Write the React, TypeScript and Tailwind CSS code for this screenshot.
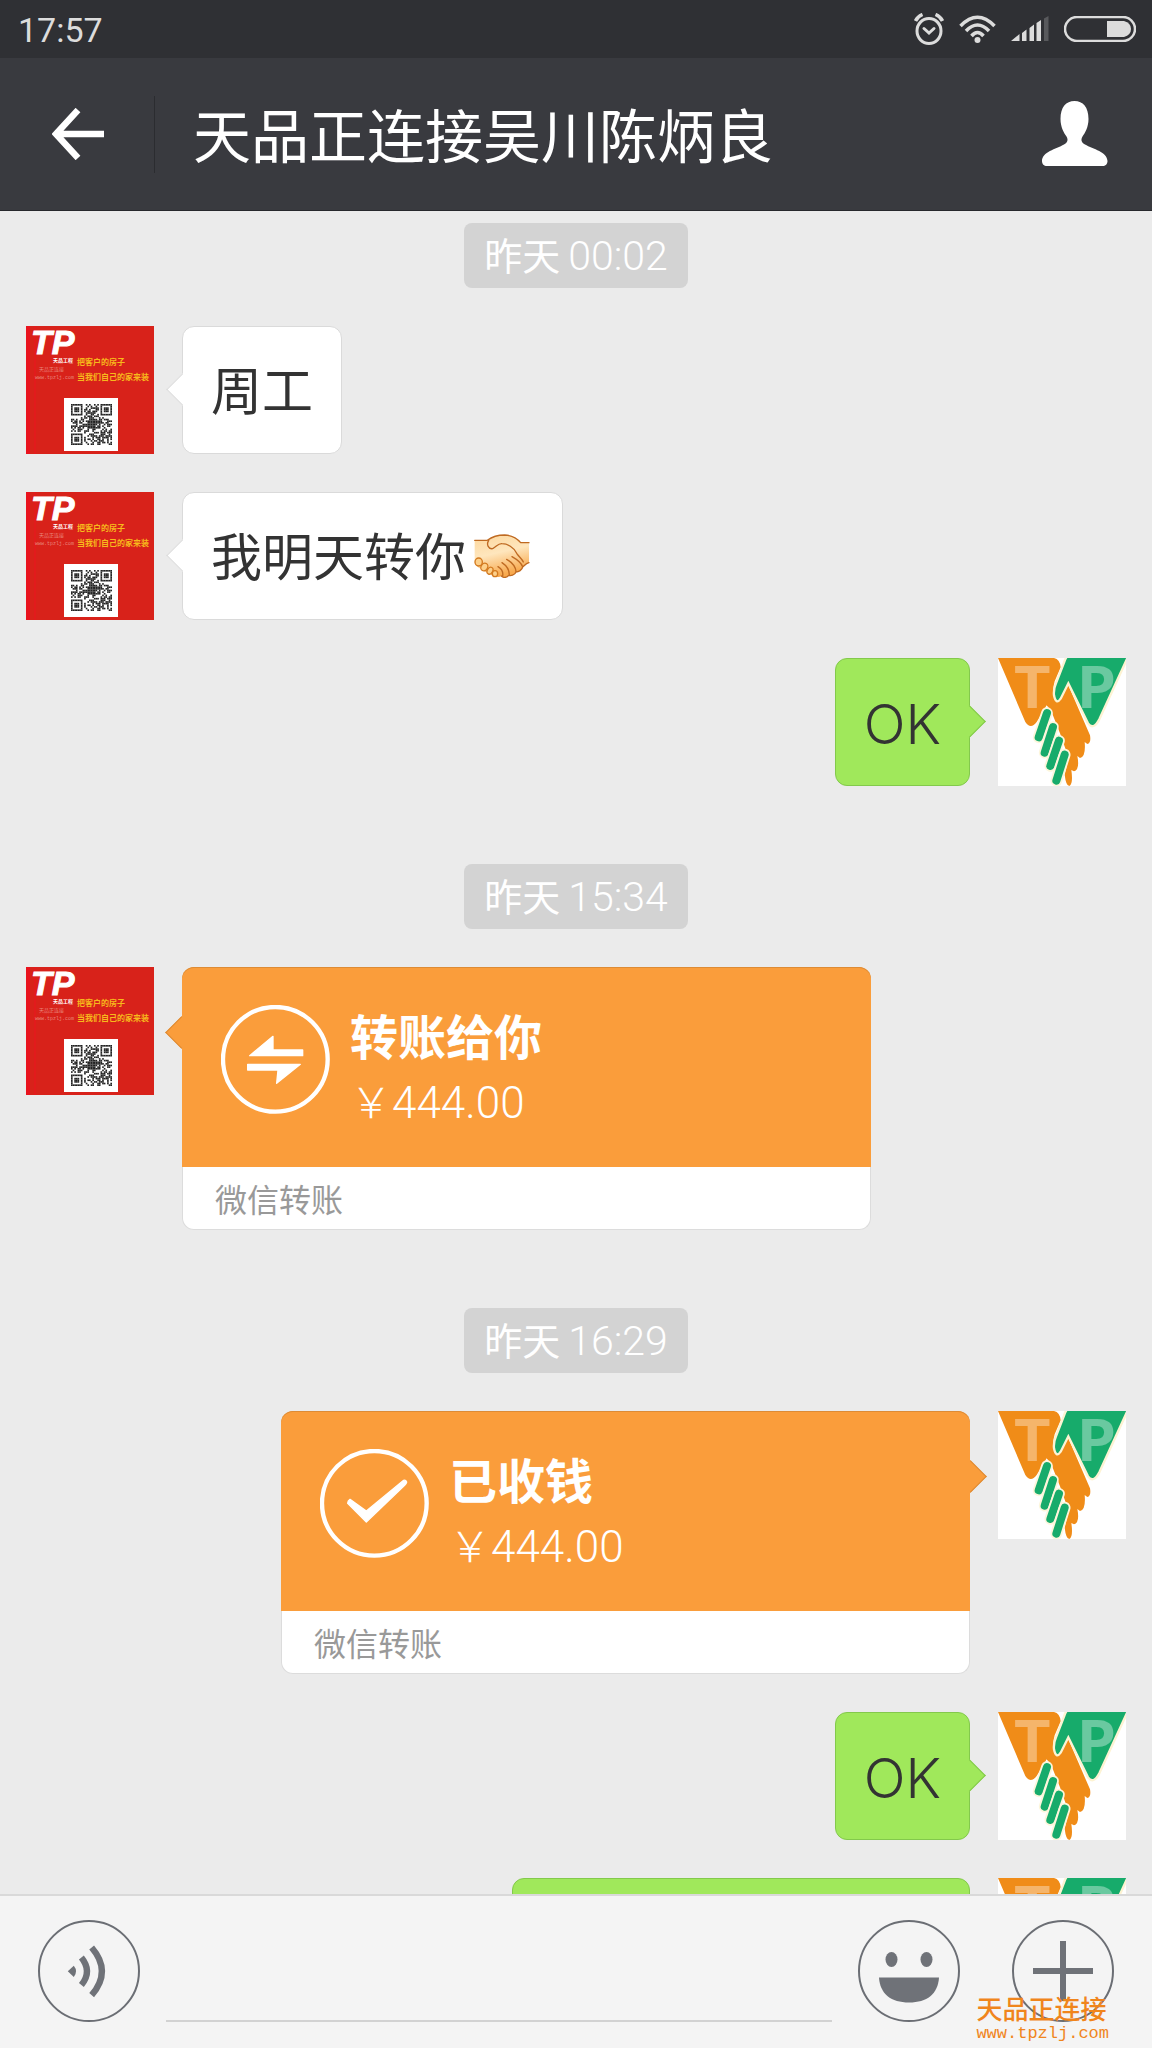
import type { ReactNode } from 'react'

type Side = 'left' | 'right'

const QR_SIZE = 25

// finder squares in three corners, noise everywhere else
const isQrDark = (x: number, y: number) => {
    const corners = [[0, 0], [QR_SIZE - 7, 0], [0, QR_SIZE - 7]]
    for (const [cx, cy] of corners) {
        const dx = x - cx
        const dy = y - cy
        if (dx >= -1 && dx <= 7 && dy >= -1 && dy <= 7) {
            const ring = Math.max(Math.abs(dx - 3), Math.abs(dy - 3))
            return ring === 3 || ring <= 1
        }
    }
    if (Math.abs(x - 12) <= 2 && Math.abs(y - 12) <= 2) return true
    return (x * 73 + y * 151 + x * y * 37 + ((x * x) ^ (y * 29))) % 7 < 4
}

const qrCells = Array.from({ length: QR_SIZE * QR_SIZE }, (_, i) => ({
    x: i % QR_SIZE,
    y: Math.floor(i / QR_SIZE)
})).filter((cell) => isQrDark(cell.x, cell.y))

const FriendAvatar = () => (
    <svg viewBox="0 0 128 128" className="size-32 shrink-0" role="img" aria-label="天品工程">
        <rect width="128" height="128" fill="#d8221a" />
        <rect width="4" height="128" fill="#e9131d" />
        <rect x="8" width="2" height="128" fill="#e21b1c" />
        <text x="5" y="28" fontSize="34" fontFamily="Liberation Sans" fontWeight="700" fontStyle="italic" fill="#fff" stroke="#fff">TP</text>
        <g fontFamily="Noto Sans CJK SC">
            <text x="27" y="36" fontSize="5" fontWeight="700" fill="#fff">天品工程</text>
            <text x="13" y="45" fontSize="5" fill="#e8857a">天品正连接</text>
            <text x="51" y="39" fontSize="8" fontWeight="700" fill="#f7b91c">把客户的房子</text>
            <text x="51" y="54" fontSize="8" fontWeight="700" fill="#f7b91c">当我们自己的家来装</text>
        </g>
        <text x="9" y="53" fontSize="5" fontFamily="Liberation Mono" fill="#e8857a">www.tpzlj.com</text>
        <rect x="38" y="72" width="54" height="53" fill="#fff" />
        <svg x="45" y="78" width="41" height="41" viewBox="0 0 25 25">
            {qrCells.map((cell) => (
                <rect key={`${cell.x}-${cell.y}`} x={cell.x} y={cell.y} width="1" height="1" fill="#222" />
            ))}
        </svg>
    </svg>
)

const fingers = [
    'M147 165L122 238',
    'M165 207L140 284',
    'M183 248L157 324',
    'M200 290L175 368'
]

const MyAvatar = () => (
    <svg viewBox="0 0 384 384" className="size-32 shrink-0" role="img" aria-label="TP">
        <rect width="384" height="384" fill="#fff" />
        <path d="M0 0H168Q186 4 188 28L170 70Q160 104 172 128L211 82L276 232Q280 254 268 258L260 252Q264 296 246 300L238 294Q246 334 228 340L220 336Q226 378 214 384Q204 384 200 350L212 300L186 226L160 160L146 142L116 192Q98 216 82 192Z" fill="#f08c18" />
        <path d="M210 -8H392L304 184Q286 218 270 196L211 76L188 122Q174 142 168 112Q166 94 174 76L198 14Q202 0 210 -8Z" fill="#17ab6b" stroke="#fdf3d3" strokeWidth="7" />
        {fingers.map((d) => (
            <g key={d} fill="none" strokeLinecap="round">
                <path d={d} stroke="#fdf6dc" strokeWidth="35" />
                <path d={d} stroke="#17ab6b" strokeWidth="24" />
            </g>
        ))}
        <g fontFamily="Liberation Mono" fill="#fff" fillOpacity="0.36" fontWeight="700">
            <text x="46" y="150" fontSize="190">T</text>
            <text x="240" y="150" fontSize="190">P</text>
        </g>
    </svg>
)

const Handshake = () => (
    <svg viewBox="-14 -14 192 146" className="ml-1 inline-block w-16 align-middle" role="img" aria-label="握手">
        <defs>
            <linearGradient id="skin" x1="0" y1="0" x2="0.3" y2="1">
                <stop offset="0" stopColor="#fdd79c" />
                <stop offset="0.5" stopColor="#fee6bd" />
                <stop offset="1" stopColor="#f8a94d" />
            </linearGradient>
        </defs>
        <path d="M0 17H38C50 8 68 1 90 1C112 2 128 12 138 24H163V84C154 86 150 92 144 97C142 106 132 112 124 112C120 122 108 124 102 122C96 130 86 130 80 124C72 130 62 126 60 122C52 124 44 118 42 112C34 114 26 108 24 102C12 102 2 92 0 84Z" fill="url(#skin)" />
        <g fill="none" stroke="#bf6a22" strokeWidth="4" strokeLinecap="round" strokeLinejoin="round">
            <path d="M0 17H38C50 8 68 1 90 1C112 2 128 12 138 24H163" />
            <path d="M42 17C34 30 42 44 54 42C66 36 70 26 82 27C98 27 118 38 126 56C134 68 142 72 146 82" />
            <path d="M163 84C154 86 150 92 144 97C142 106 132 112 124 112C120 122 108 124 102 122C96 130 86 130 80 124" />
            <path d="M96 74C110 82 122 94 124 110M82 84C94 92 104 106 104 120M70 96C80 102 86 112 84 124M112 66C126 74 140 86 144 96" />
        </g>
        <g fill="#fdd08a" stroke="#d37a20" strokeWidth="4">
            <ellipse cx="12" cy="82" rx="11" ry="12" />
            <ellipse cx="29" cy="97" rx="10" ry="12" transform="rotate(30 29 97)" />
            <ellipse cx="46" cy="108" rx="8" ry="11" transform="rotate(30 46 108)" />
            <ellipse cx="61" cy="117" rx="8" ry="9" />
        </g>
    </svg>
)

const TransferIcon = () => (
    <svg viewBox="0 0 327 327" className="size-[109px] shrink-0" aria-hidden="true">
        <circle cx="163" cy="163" r="157" fill="none" stroke="#fff" strokeWidth="13" />
        <g fill="#fff" stroke="#fff" strokeWidth="4" strokeLinejoin="round">
            <path d="M86 152L156 94V135H245V152Z" />
            <path d="M80 178H238L167 235L171 195H80Z" />
        </g>
    </svg>
)

const ReceivedIcon = () => (
    <svg viewBox="0 0 327 327" className="size-[109px] shrink-0" aria-hidden="true">
        <circle cx="163" cy="163" r="157" fill="none" stroke="#fff" strokeWidth="13" />
        <path d="M90 151L139 186L251 94Q257 92 260 99Q259 104 254 109L139 219L83 163Q83 155 90 151Z" fill="#fff" stroke="#fff" strokeWidth="4" strokeLinejoin="round" />
    </svg>
)

const StatusBar = () => (
    <div className="flex h-[58px] shrink-0 items-center justify-between bg-[#2f3034] pl-[18px] pr-4 text-[#dcdcdc]">
        <time className="pt-0.5 font-['Roboto'] text-[34px] leading-10">17:57</time>
        <div className="flex items-center gap-[15px]">
            <svg viewBox="0 0 30 32" className="h-8 w-[30px]" fill="none" stroke="currentColor" strokeWidth="3" aria-hidden="true">
                <ellipse cx="15" cy="18" rx="12" ry="12.5" />
                <path d="M10 15.5L15 20L20 15.5" strokeLinecap="round" />
                <path d="M1.5 8Q3.500 3.500 8.500 1.500M28.500 8Q26.500 3.500 21.500 1.500" strokeWidth="3.500" />
            </svg>
            <svg viewBox="0 0 37 28" className="h-7 w-[37px]" fill="none" stroke="currentColor" strokeWidth="3.500" aria-hidden="true">
                <path d="M1.500 11Q18.500 -6.500 35.500 11M7 16Q18.500 4 30 16M12.500 21Q18.500 14 24.500 21" />
                <circle cx="18.500" cy="25" r="3" fill="currentColor" stroke="none" />
            </svg>
            <svg viewBox="0 0 38 26" className="h-[26px] w-[38px]" fill="currentColor" aria-hidden="true">
                <path d="M0 25L8.500 18V25ZM11 17L15.500 13.500V25H11ZM18.500 12L23 8.500V25H18.500ZM25.500 7L30 4V25H25.500Z" />
                <path d="M33 2.500L37.500 0V25H33Z" fill="#58595c" />
            </svg>
            <svg viewBox="0 0 72 26" className="h-[26px] w-[72px]" aria-hidden="true">
                <rect x="1" y="1" width="70" height="24" rx="12" fill="none" stroke="currentColor" strokeWidth="2.500" />
                <path d="M43 5H60Q67 7 67 13Q67 19 60 21H43Z" fill="currentColor" />
            </svg>
        </div>
    </div>
)

const Header = () => (
    <header className="flex h-[153px] shrink-0 items-center border-b border-[#27282c] bg-[#393a3f] pr-11 text-white">
        <button type="button" aria-label="返回" className="flex h-full w-[154px] items-center justify-center pl-0.5">
            <svg viewBox="0 0 52 52" className="size-[52px]" fill="none" stroke="currentColor" strokeWidth="6.500" aria-hidden="true">
                <path d="M26 2L4 26L26 50M4 26H52" />
            </svg>
        </button>
        <div className="h-[77px] w-px bg-[#2b2c30]" />
        <h1 className="min-w-0 flex-1 whitespace-nowrap pb-0.5 pl-[38px] text-[58px] leading-[88px]">天品正连接吴川陈炳良</h1>
        <button type="button" aria-label="聊天信息">
            <svg viewBox="0 0 66 66" className="size-[66px]" fill="currentColor" aria-hidden="true">
                <path d="M32.500 0C24 0 18.500 6 18.500 18C18.500 26 22 32 24.500 35.500C26.500 39 25.500 41.500 22 43.500C14 48 0 51 0 60C0 63 2 65 5 65H60.500C63.500 65 65.500 63 65.500 60C65.500 51 51 48 43 43.500C39.500 41.500 38.500 39 40.500 35.500C43 32 46.500 26 46.500 18C46.500 6 41 0 32.500 0Z" />
            </svg>
        </button>
    </header>
)

const Timestamp = ({ day, time }: { day: string; time: string }) => (
    <div className="self-center rounded-lg bg-[#d3d3d3] px-5 text-white">
        <time className="flex h-[65px] items-baseline gap-2 leading-[62px]">
            <span className="text-[38px]">{day}</span>
            <span className="font-['Roboto'] text-[41px] font-light">{time}</span>
        </time>
    </div>
)

const Row = ({ side, children }: { side: Side; children: ReactNode }) => (
    <div className={`flex items-start gap-7 ${side === 'left' ? '' : 'flex-row-reverse'}`}>
        {side === 'left' ? <FriendAvatar /> : <MyAvatar />}
        {children}
    </div>
)

const Bubble = ({ side, children }: { side: Side; children?: ReactNode }) => (
    <div
        className={`relative flex h-32 items-center rounded-xl border px-7 pb-1 text-[51px] text-[#333] ${side === 'left' ? 'border-[#dadada] bg-white' : 'border-[#83c94c] bg-[#a0e85b]'
            }`}
    >
        <span
            className={`absolute top-[51px] size-[23px] rotate-45 ${side === 'left'
                    ? '-left-3 border-b border-l border-[#dadada] bg-white'
                    : '-right-3 border-r border-t border-[#83c94c] bg-[#a0e85b]'
                }`}
        />
        {children}
    </div>
)

const LatinText = ({ children }: { children: ReactNode }) => (
    <p className="pt-2 font-['Inter'] text-[55px] font-light leading-[64px]">{children}</p>
)

interface TransferCardProps {
    side: Side
    icon: ReactNode
    title: string
    amount: string
}

const TransferCard = ({ side, icon, title, amount }: TransferCardProps) => (
    <div className="relative w-[689px]">
        <span
            className={`absolute top-[54px] size-[23px] rotate-45 border-[#dd8b35] bg-[#fa9d3b] ${side === 'left' ? '-left-3 border-b border-l' : '-right-3 border-r border-t'
                }`}
        />
        <div className="relative flex h-[200px] items-start gap-5 rounded-t-xl bg-[#fa9d3b] pl-[39px] pt-[38px] text-white shadow-[inset_0_1px_0_#dd8b35]">
            {icon}
            <div>
                <h2 className="text-[48px] font-bold leading-[58px]">{title}</h2>
                <p className="flex items-baseline text-[42px] leading-[74px]">
                    <span className="font-light">￥</span>
                    <span className="font-['Roboto'] text-[44px] font-light">{amount}</span>
                </p>
            </div>
        </div>
        <div className="h-[63px] rounded-b-xl border border-t-0 border-[#dcdcdc] bg-white pl-8 text-[32px] leading-[62px] text-[#999]">
            微信转账
        </div>
    </div>
)

const roundButton = 'size-[102px] shrink-0 rounded-full border-2 border-[#6b6e74] text-[#6f7278]'

const Composer = () => (
    <footer className="relative flex h-[154px] shrink-0 items-start gap-[26px] border-t-2 border-[#d9d9d9] bg-[#f4f4f4] px-[38px] pt-6">
        <button type="button" aria-label="语音" className={roundButton}>
            <svg viewBox="6 6 296 296" className="size-full" aria-hidden="true">
                <path d="M90 155L108 138Q122 155 108 172Z" fill="currentColor" />
                <g fill="none" stroke="currentColor" strokeWidth="19">
                    <path d="M131 113Q165 155 131 196" />
                    <path d="M162 83Q224 155 162 227" />
                </g>
            </svg>
        </button>
        <input type="text" aria-label="消息" className="h-[102px] min-w-0 flex-1 border-b-2 border-[#d2d2d2] bg-transparent text-[48px] outline-none" />
        <button type="button" aria-label="表情" className={roundButton}>
            <svg viewBox="2 2 98 98" className="size-full" fill="currentColor" aria-hidden="true">
                <ellipse cx="33.500" cy="39.500" rx="6" ry="7.500" />
                <ellipse cx="68.500" cy="39.500" rx="6" ry="7.500" />
                <path d="M21 57.500H81C80 74 69 82.500 51 82.500S22 74 21 57.500Z" />
            </svg>
        </button>
        <button type="button" aria-label="更多" className={`ml-[26px] ${roundButton}`}>
            <svg viewBox="2 2 98 98" className="size-full" fill="currentColor" aria-hidden="true">
                <path d="M48 21H54V48H81V54H54V81H48V54H21V48H48Z" />
            </svg>
        </button>
        {/* Watermark */}
        <div className="pointer-events-none absolute bottom-1 right-[43px] text-[#f0851c]">
            <p className="text-[26px] font-medium leading-8">天品正连接</p>
            <p className="font-['Liberation_Mono'] text-[17px] leading-5">www.tpzlj.com</p>
        </div>
    </footer>
)

export default function App() {
    return (
        <div className="flex h-screen flex-col overflow-hidden bg-[#ebebeb] font-['Noto_Sans_CJK_SC',sans-serif]">
            <StatusBar />
            <Header />
            <main className="flex min-h-0 flex-1 flex-col gap-[38px] overflow-hidden px-[26px] pt-3">
                <Timestamp day="昨天" time="00:02" />
                <Row side="left">
                    <Bubble side="left">周工</Bubble>
                </Row>
                <Row side="left">
                    <Bubble side="left">
                        我明天转你
                        <Handshake />
                    </Bubble>
                </Row>
                <Row side="right">
                    <Bubble side="right">
                        <LatinText>OK</LatinText>
                    </Bubble>
                </Row>
                <div className="flex flex-col pt-10">
                    <Timestamp day="昨天" time="15:34" />
                </div>
                <Row side="left">
                    <TransferCard side="left" icon={<TransferIcon />} title="转账给你" amount="444.00" />
                </Row>
                <div className="flex flex-col pt-10">
                    <Timestamp day="昨天" time="16:29" />
                </div>
                <Row side="right">
                    <TransferCard side="right" icon={<ReceivedIcon />} title="已收钱" amount="444.00" />
                </Row>
                <Row side="right">
                    <Bubble side="right">
                        <LatinText>OK</LatinText>
                    </Bubble>
                </Row>
                <Row side="right">
                    <Bubble side="right">
                        <div className="w-[400px]" />
                    </Bubble>
                </Row>
            </main>
            <Composer />
        </div>
    )
}
